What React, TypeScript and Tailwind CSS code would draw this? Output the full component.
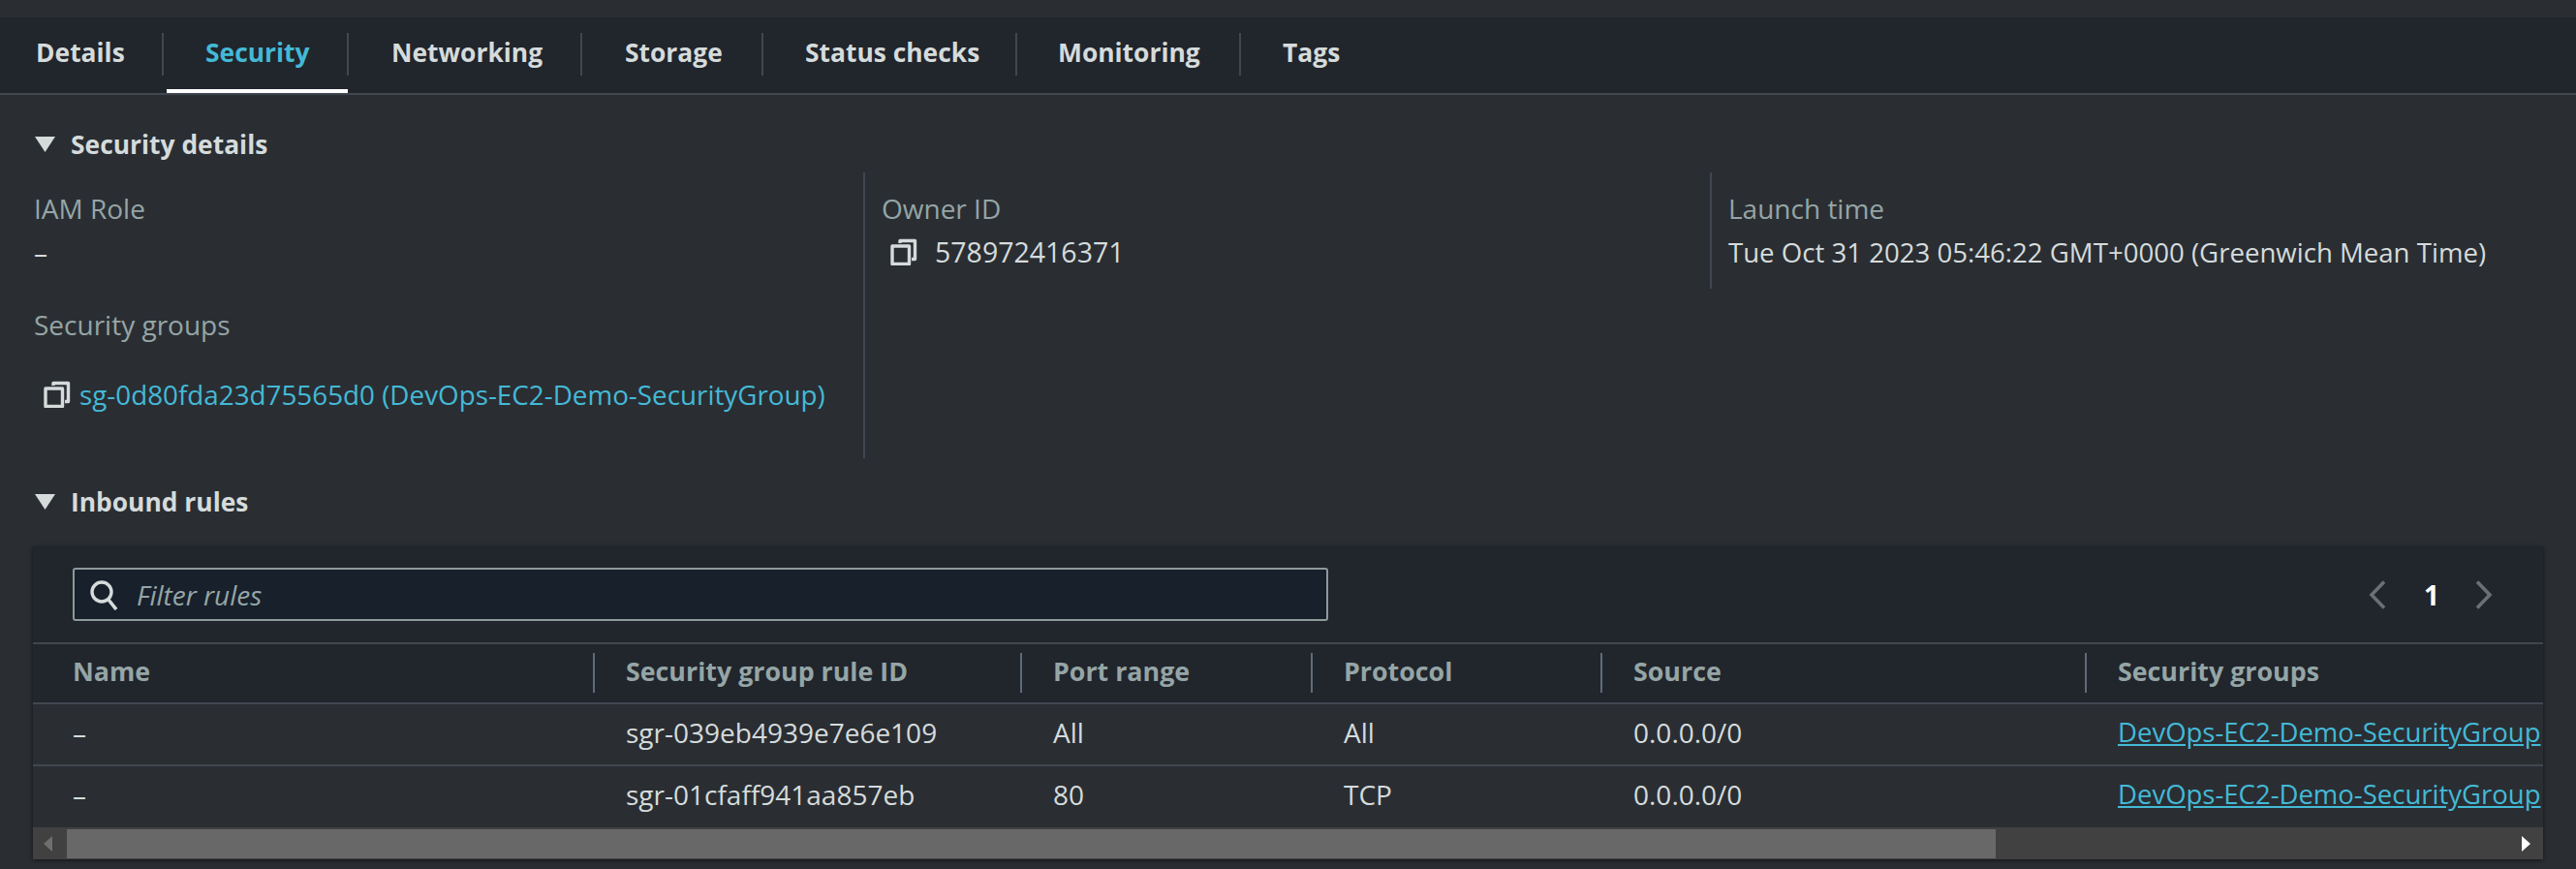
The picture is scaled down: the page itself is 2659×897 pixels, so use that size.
import React from "react";

const font = { fontFamily: '"Open Sans", "Noto Sans", sans-serif' };

function Tri() {
  return (
    <svg width="21" height="16" viewBox="0 0 21 16" className="shrink-0">
      <path d="M0 0H21L10.5 16Z" fill="#d5dbdb" />
    </svg>
  );
}

function CopyIcon() {
  return (
    <svg width="28" height="28" viewBox="0 0 28 28" fill="none" className="shrink-0">
      <path d="M10 5V2.5H25.5V21.5H22" stroke="#d5dbdb" strokeWidth="3.4" strokeLinejoin="round" />
      <rect x="2" y="8" width="17.5" height="18.5" stroke="#d5dbdb" strokeWidth="3.4" strokeLinejoin="round" />
    </svg>
  );
}

function SectionHead({ title }: { title: string }) {
  return (
    <div className="flex items-center gap-[16px] pl-[36px] text-[26.4px] leading-[36px] font-bold text-[#d5dbdb]">
      <Tri />
      <span>{title}</span>
    </div>
  );
}

const tabs = [
  { t: "Details", w: "w-[169px] pl-[37px]" },
  { t: "Security", w: "w-[191px] pl-[43px]", on: true },
  { t: "Networking", w: "w-[241px] pl-[44px]" },
  { t: "Storage", w: "w-[187px] pl-[44px]" },
  { t: "Status checks", w: "w-[262px] pl-[43px]" },
  { t: "Monitoring", w: "w-[231px] pl-[42px]" },
  { t: "Tags", w: "w-[120px] pl-[43px]" },
];

const cols = "grid grid-cols-[580px_441px_300px_299px_500px_471px]";
const heads = ["Name", "Security group rule ID", "Port range", "Protocol", "Source", "Security groups"];
const rows = [
  ["–", "sgr-039eb4939e7e6e109", "All", "All", "0.0.0.0/0", "DevOps-EC2-Demo-SecurityGroup"],
  ["–", "sgr-01cfaff941aa857eb", "80", "TCP", "0.0.0.0/0", "DevOps-EC2-Demo-SecurityGroup"],
];

export default function App() {
  return (
    <div style={font} className="w-[2659px] h-[897px] overflow-hidden bg-[#2a2e33] text-[28px] text-[#d5dbdb]">
      <div className="h-[18px]" />
      {/* Tabs */}
      <div className="flex h-[78px] bg-[#21252c] border-b-2 border-[#414750] box-content">
        {tabs.map((x) => (
          <div key={x.t} className={`relative flex items-center h-[78px] ${x.w}`}>
            <span className={`font-bold text-[26.4px] leading-[36px] -mt-[6px] ${x.on ? "text-[#44b9d6]" : "text-[#d5dbdb]"}`}>{x.t}</span>
            {x.t !== "Tags" && <span className="absolute right-0 top-[16px] h-[44px] w-[2px] bg-[#414750]" />}
            {x.on && <span className="absolute left-[3px] right-[1px] bottom-0 h-[4px] bg-white" />}
          </div>
        ))}
      </div>

      {/* Security details */}
      <div className="pt-[33px]">
        <SectionHead title="Security details" />
        <div className="flex mt-[11px] h-[295px]">
          <div className="w-[893px] shrink-0 border-r-2 border-[#414750] pl-[35px] pt-[19px]">
            <div className="leading-[36px] text-[#95a5a6]">IAM Role</div>
            <div className="leading-[36px] mt-[9px]">–</div>
            <div className="leading-[36px] mt-[39px] text-[#95a5a6]">Security groups</div>
            <div className="flex items-center gap-[9px] mt-[36px] pl-[10px] leading-[36px]">
              <CopyIcon />
              <span className="text-[27.8px] text-[#44b9d6] whitespace-nowrap">sg-0d80fda23d75565d0 (DevOps-EC2-Demo-SecurityGroup)</span>
            </div>
          </div>
          <div className="w-[874px] shrink-0 h-[120px] border-r-2 border-[#414750] pl-[17px] pt-[19px]">
            <div className="leading-[36px] text-[#95a5a6]">Owner ID</div>
            <div className="flex items-center gap-[18px] mt-[9px] pl-[9px] leading-[36px]">
              <CopyIcon />
              <span className="text-[28.5px]">578972416371</span>
            </div>
          </div>
          <div className="pl-[17px] pt-[19px]">
            <div className="leading-[36px] text-[#95a5a6]">Launch time</div>
            <div className="text-[27.6px] leading-[36px] mt-[9px] whitespace-nowrap">Tue Oct 31 2023 05:46:22 GMT+0000 (Greenwich Mean Time)</div>
          </div>
        </div>
      </div>

      {/* Inbound rules */}
      <div className="mt-[27px]">
        <SectionHead title="Inbound rules" />
      </div>
      <div className="ml-[34px] mt-[28px] w-[2591px] bg-[#21252c] shadow-[0_1px_4px_rgba(0,0,0,0.6)] overflow-hidden">
        <div className="flex items-center justify-between h-[99px] pl-[41px] pr-[52px]">
          <div className="flex items-center gap-[18px] w-[1296px] h-[55px] border-2 border-[#8d9a9b] rounded-[3px] bg-[#18202b] pl-[14px]">
            <svg width="32" height="32" viewBox="0 0 32 32" fill="none" className="shrink-0">
              <circle cx="14" cy="13" r="10" stroke="#d5dbdb" strokeWidth="3.4" />
              <path d="M21 21L29 31" stroke="#d5dbdb" strokeWidth="3.6" />
            </svg>
            <span className="italic text-[#95a5a6]">Filter rules</span>
          </div>
          <div className="flex items-center gap-[39px]">
            <svg width="18" height="30" viewBox="0 0 18 30" fill="none">
              <path d="M16 1.5L3 15L16 28.5" stroke="#687078" strokeWidth="3.6" />
            </svg>
            <span className="font-bold text-white w-[14px] text-center">1</span>
            <svg width="18" height="30" viewBox="0 0 18 30" fill="none">
              <path d="M2 1.5L15 15L2 28.5" stroke="#687078" strokeWidth="3.6" />
            </svg>
          </div>
        </div>
        <div className={`${cols} h-[60px] border-t-2 border-b-2 border-[#414750] box-content`}>
          {heads.map((h, i) => (
            <div key={h} className={`relative flex items-center font-bold text-[26.8px] text-[#95a5a6] whitespace-nowrap pb-[3px] ${i === 0 ? "pl-[41px]" : "pl-[32px]"}`}>
              {h}
              {i < 5 && <span className="absolute right-0 top-[9px] h-[41px] w-[2px] bg-[#5f6b7a]" />}
            </div>
          ))}
        </div>
        {rows.map((r, ri) => (
          <div key={ri} className={`${cols} ${ri === 0 ? "h-[62px] border-b-2 border-[#414750] box-content" : "h-[63px]"} bg-[#2a2e33]`}>
            {r.map((c, i) => (
              <div key={i} className={`flex items-center overflow-hidden whitespace-nowrap pb-[5px] ${i === 0 ? "pl-[41px]" : "pl-[32px]"} ${i === 5 ? "text-[27.5px] text-[#44b9d6] underline" : ""}`}>
                {c}
              </div>
            ))}
          </div>
        ))}
        {/* Scrollbar */}
        <div className="flex items-center h-[33px] bg-[#414141] pt-[2px] pb-[1px]">
          <div className="w-[35px] h-full shrink-0 flex items-center justify-center pr-[4px]">
            <svg width="9" height="16" viewBox="0 0 9 16"><path d="M9 0V16L0 8Z" fill="#6f6f6f" /></svg>
          </div>
          <div className="w-[1991px] h-full bg-[#686868] shrink-0" />
          <div className="flex-1 h-full flex items-center justify-end pr-[13px]">
            <svg width="9" height="16" viewBox="0 0 9 16"><path d="M0 0V16L9 8Z" fill="#ffffff" /></svg>
          </div>
        </div>
      </div>
    </div>
  );
}
